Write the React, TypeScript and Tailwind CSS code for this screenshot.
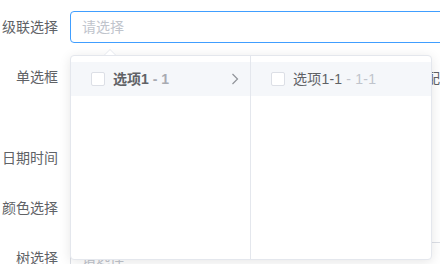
const FONT = "font-['Liberation_Sans','Noto_Sans_CJK_SC',sans-serif]";

function FormItem({ label, children, tall }: { label: string; children?: React.ReactNode; tall?: boolean }) {
  return (
    <div className={`flex mb-[18px] ${tall ? "h-[63px]" : "h-8"}`}>
      <label className="w-[70px] shrink-0 pr-3 text-right text-sm leading-8 text-[#606266]">{label}</label>
      <div className="flex-1 min-w-0">{children}</div>
    </div>
  );
}

function Checkbox() {
  return <span className="inline-block h-[14px] w-[14px] shrink-0 rounded-[2px] border border-[#dcdfe6] bg-white" />;
}

function CascaderPanel() {
  return (
    <div className="absolute left-[70px] top-[55px] z-10">
      {/* arrow */}
      <div className="absolute left-[34px] top-[-6px] h-0 w-0 border-x-[6px] border-b-[6px] border-x-transparent border-b-[#e4e7ed]" />
      <div className="absolute left-[35px] top-[-5px] h-0 w-0 border-x-[5px] border-b-[5px] border-x-transparent border-b-white" />
      <div className="flex h-[205px] rounded border border-[#e4e7ed] bg-white shadow-[0_2px_12px_0_rgba(0,0,0,0.1)]">
        <div className="w-[180px] border-r border-[#e4e7ed] py-[6px]">
          <div className="flex h-[34px] items-center bg-[#f5f7fa] pl-5 pr-[10px] text-sm">
            <Checkbox />
            <span className="ml-2 flex-1 font-bold text-[#606266]">
              选项1 <span className="text-[#a8abb2]">- 1</span>
            </span>
            <svg width="8" height="12" viewBox="0 0 8 12" className="mr-[1px]">
              <polyline points="1.5,1 6.5,6 1.5,11" fill="none" stroke="#909399" strokeWidth="1.2" />
            </svg>
          </div>
        </div>
        <div className="w-[180px] py-[6px]">
          <div className="flex h-[34px] items-center bg-[#f5f7fa] pl-5 text-sm">
            <Checkbox />
            <span className="ml-2 tracking-[0.2px] text-[#606266]">
              选项1-1 <span className="text-[#c0c4cc]">- 1-1</span>
            </span>
          </div>
        </div>
      </div>
    </div>
  );
}

export default function App() {
  return (
    <div className={`relative h-[264px] w-[440px] overflow-hidden bg-white ${FONT}`}>
      <div className="pt-[11px]">
        <FormItem label="级联选择">
          <div className="flex h-8 w-[400px] items-center rounded border border-[#409eff] pl-[11px] text-sm text-[#c0c4cc]">
            请选择
          </div>
        </FormItem>
        <FormItem label="单选框" tall>
          <div className="flex h-8 items-center text-sm text-[#606266]">
            <span className="ml-[356px] mt-[1px] whitespace-nowrap">配置</span>
          </div>
        </FormItem>
        <FormItem label="日期时间">
          <div className="h-8 w-[220px] rounded border border-[#dcdfe6]" />
        </FormItem>
        <FormItem label="颜色选择">
          <div className="h-8 w-8 rounded border border-[#dcdfe6]" />
        </FormItem>
        <FormItem label="树选择">
          <div className="flex h-8 w-[400px] items-center rounded border border-[#dcdfe6] pl-[11px] text-sm text-[#c0c4cc]">
            请选择
          </div>
        </FormItem>
      </div>
      <CascaderPanel />
    </div>
  );
}
